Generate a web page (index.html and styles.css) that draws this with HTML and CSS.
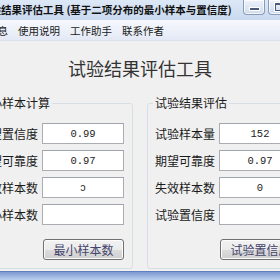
FILE: index.html
```html
<!DOCTYPE html>
<html lang="zh-CN">
<head>
    <meta charset="UTF-8">
    <title>试验结果评估工具</title>
    <link rel="stylesheet" href="styles.css">
</head>
<body>
    <div class="window">
        <div class="titlebar">
            <span class="title">试验结果评估工具 (基于二项分布的最小样本与置信度)</span>
            <div class="controls">
                <span class="ctl min"><i></i></span>
                <span class="ctl max"><i></i></span>
                <span class="ctl close"></span>
            </div>
        </div>
        <div class="menubar">
            <span>软件信息</span>
            <span>使用说明</span>
            <span>工作助手</span>
            <span>联系作者</span>
        </div>
        <div class="client">
            <h1 class="heading">试验结果评估工具</h1>
            <div class="groups">
                <fieldset class="group">
                    <legend>最小样本计算</legend>
                    <div class="row"><label>期望置信度</label><input type="text" value="0.99"></div>
                    <div class="row"><label>期望可靠度</label><input type="text" value="0.97"></div>
                    <div class="row"><label>失效样本数</label><input type="text" value="ↄ"></div>
                    <div class="row"><label>最小样本数</label><input type="text" value=""></div>
                    <div class="actions"><button>最小样本数</button></div>
                </fieldset>
                <fieldset class="group">
                    <legend>试验结果评估</legend>
                    <div class="row"><label>试验样本量</label><input type="text" value="152"></div>
                    <div class="row"><label>期望可靠度</label><input type="text" value="0.97"></div>
                    <div class="row"><label>失效样本数</label><input type="text" value="0"></div>
                    <div class="row"><label>试验置信度</label><input type="text" value=""></div>
                    <div class="actions"><button>试验置信度</button></div>
                </fieldset>
            </div>
        </div>
        <div class="frame-bottom"></div>
    </div>
</body>
</html>
```

FILE: styles.css
```css
body {
    margin: 0;
    width: 280px;
    height: 280px;
    overflow: hidden;
    background: #f0f0f0;
    font-family: "Noto Sans CJK SC", sans-serif;
    color: #1a1a1a;
}

.window {
    margin-left: -38px;
    width: 356px;
    height: 280px;
    display: flex;
    flex-direction: column;
}

/* title bar */
.titlebar {
    height: 20px;
    flex: none;
    display: flex;
    align-items: flex-start;
    background: linear-gradient(#dde8f6, #c9d9ef);
}

.title {
    flex: 1;
    min-width: 0;
    overflow: hidden;
    padding-left: 18px;
    font-size: 10.5px;
    font-weight: bold;
    line-height: 19px;
    color: #111;
    white-space: nowrap;
}

.controls {
    flex: none;
    display: flex;
    gap: 2px;
    margin-right: 3px;
}

.ctl {
    width: 20px;
    height: 14px;
    border: 1px solid #8a9cb8;
    border-top: none;
    border-radius: 0 0 4px 4px;
    background: linear-gradient(#eef3fa, #cfdbed);
    box-shadow: inset 0 0 0 1px rgba(255, 255, 255, 0.7);
    display: flex;
    justify-content: center;
    align-items: flex-end;
}

.ctl.min {
    margin-right: 1px;
}

.ctl.close {
    width: 21px;
    background: linear-gradient(#e8a493, #c75a3f);
}

.min i {
    width: 9px;
    height: 2px;
    margin-bottom: 3px;
    background: #4a5a78;
    border: 1px solid #fff;
}

.max i {
    width: 7px;
    height: 5px;
    margin-bottom: 3px;
    border: 1px solid #4a5a78;
    border-top-width: 2px;
    box-shadow: 0 0 0 1px #fff;
}

/* menu */
.menubar {
    height: 20px;
    flex: none;
    display: flex;
    gap: 10px;
    padding-left: 4px;
    font-size: 10.5px;
    line-height: 21px;
    background: linear-gradient(#f6f8fc, #e3e9f5);
    border-bottom: 1px solid #dae2ee;
}

/* client area */
.client {
    flex: 1;
    padding: 0 8px;
}

.heading {
    margin: 15px 0 16px;
    font-size: 18px;
    font-weight: normal;
    line-height: 24px;
    text-align: center;
    color: #333;
}

.groups {
    display: flex;
    gap: 14px;
}

.group {
    width: 163px;
    box-sizing: border-box;
    margin: 0;
    padding: 13px 0 8px 7px;
    border: 1px solid #d5dfe5;
    border-radius: 3px;
    min-width: 0;
}

.group legend {
    margin-left: -2px;
    padding: 0 2px;
    font-size: 12px;
    line-height: 14px;
    color: #1a1a1a;
}

.row {
    display: flex;
    align-items: center;
    margin-bottom: 6px;
}

.row label {
    width: 64px;
    flex: none;
    font-size: 12px;
    white-space: nowrap;
}

.row input {
    width: 82px;
    height: 21px;
    box-sizing: border-box;
    margin: 0;
    padding: 0;
    border: 1px solid #abadb3;
    border-top-color: #a0a4ac;
    background: #fff;
    font-family: "Liberation Mono", monospace;
    font-size: 10.5px;
    color: #222;
    text-align: center;
}

.actions {
    padding: 5px 0 0 65px;
}

.actions button {
    width: 81px;
    height: 21px;
    padding: 0;
    border: 1px solid #707070;
    border-radius: 3px;
    background: linear-gradient(#f2f2f2 0%, #ebebeb 50%, #dddddd 51%, #cfcfcf 100%);
    box-shadow: inset 0 0 0 1px #fcfcfc;
    font-family: "Noto Sans CJK SC", sans-serif;
    font-size: 12px;
    color: #44446c;
    white-space: nowrap;
}

.frame-bottom {
    height: 8px;
    flex: none;
    background: linear-gradient(#7d9ad2, #b9cdee);
    border-top: 1px solid #5d7fc2;
}
```
